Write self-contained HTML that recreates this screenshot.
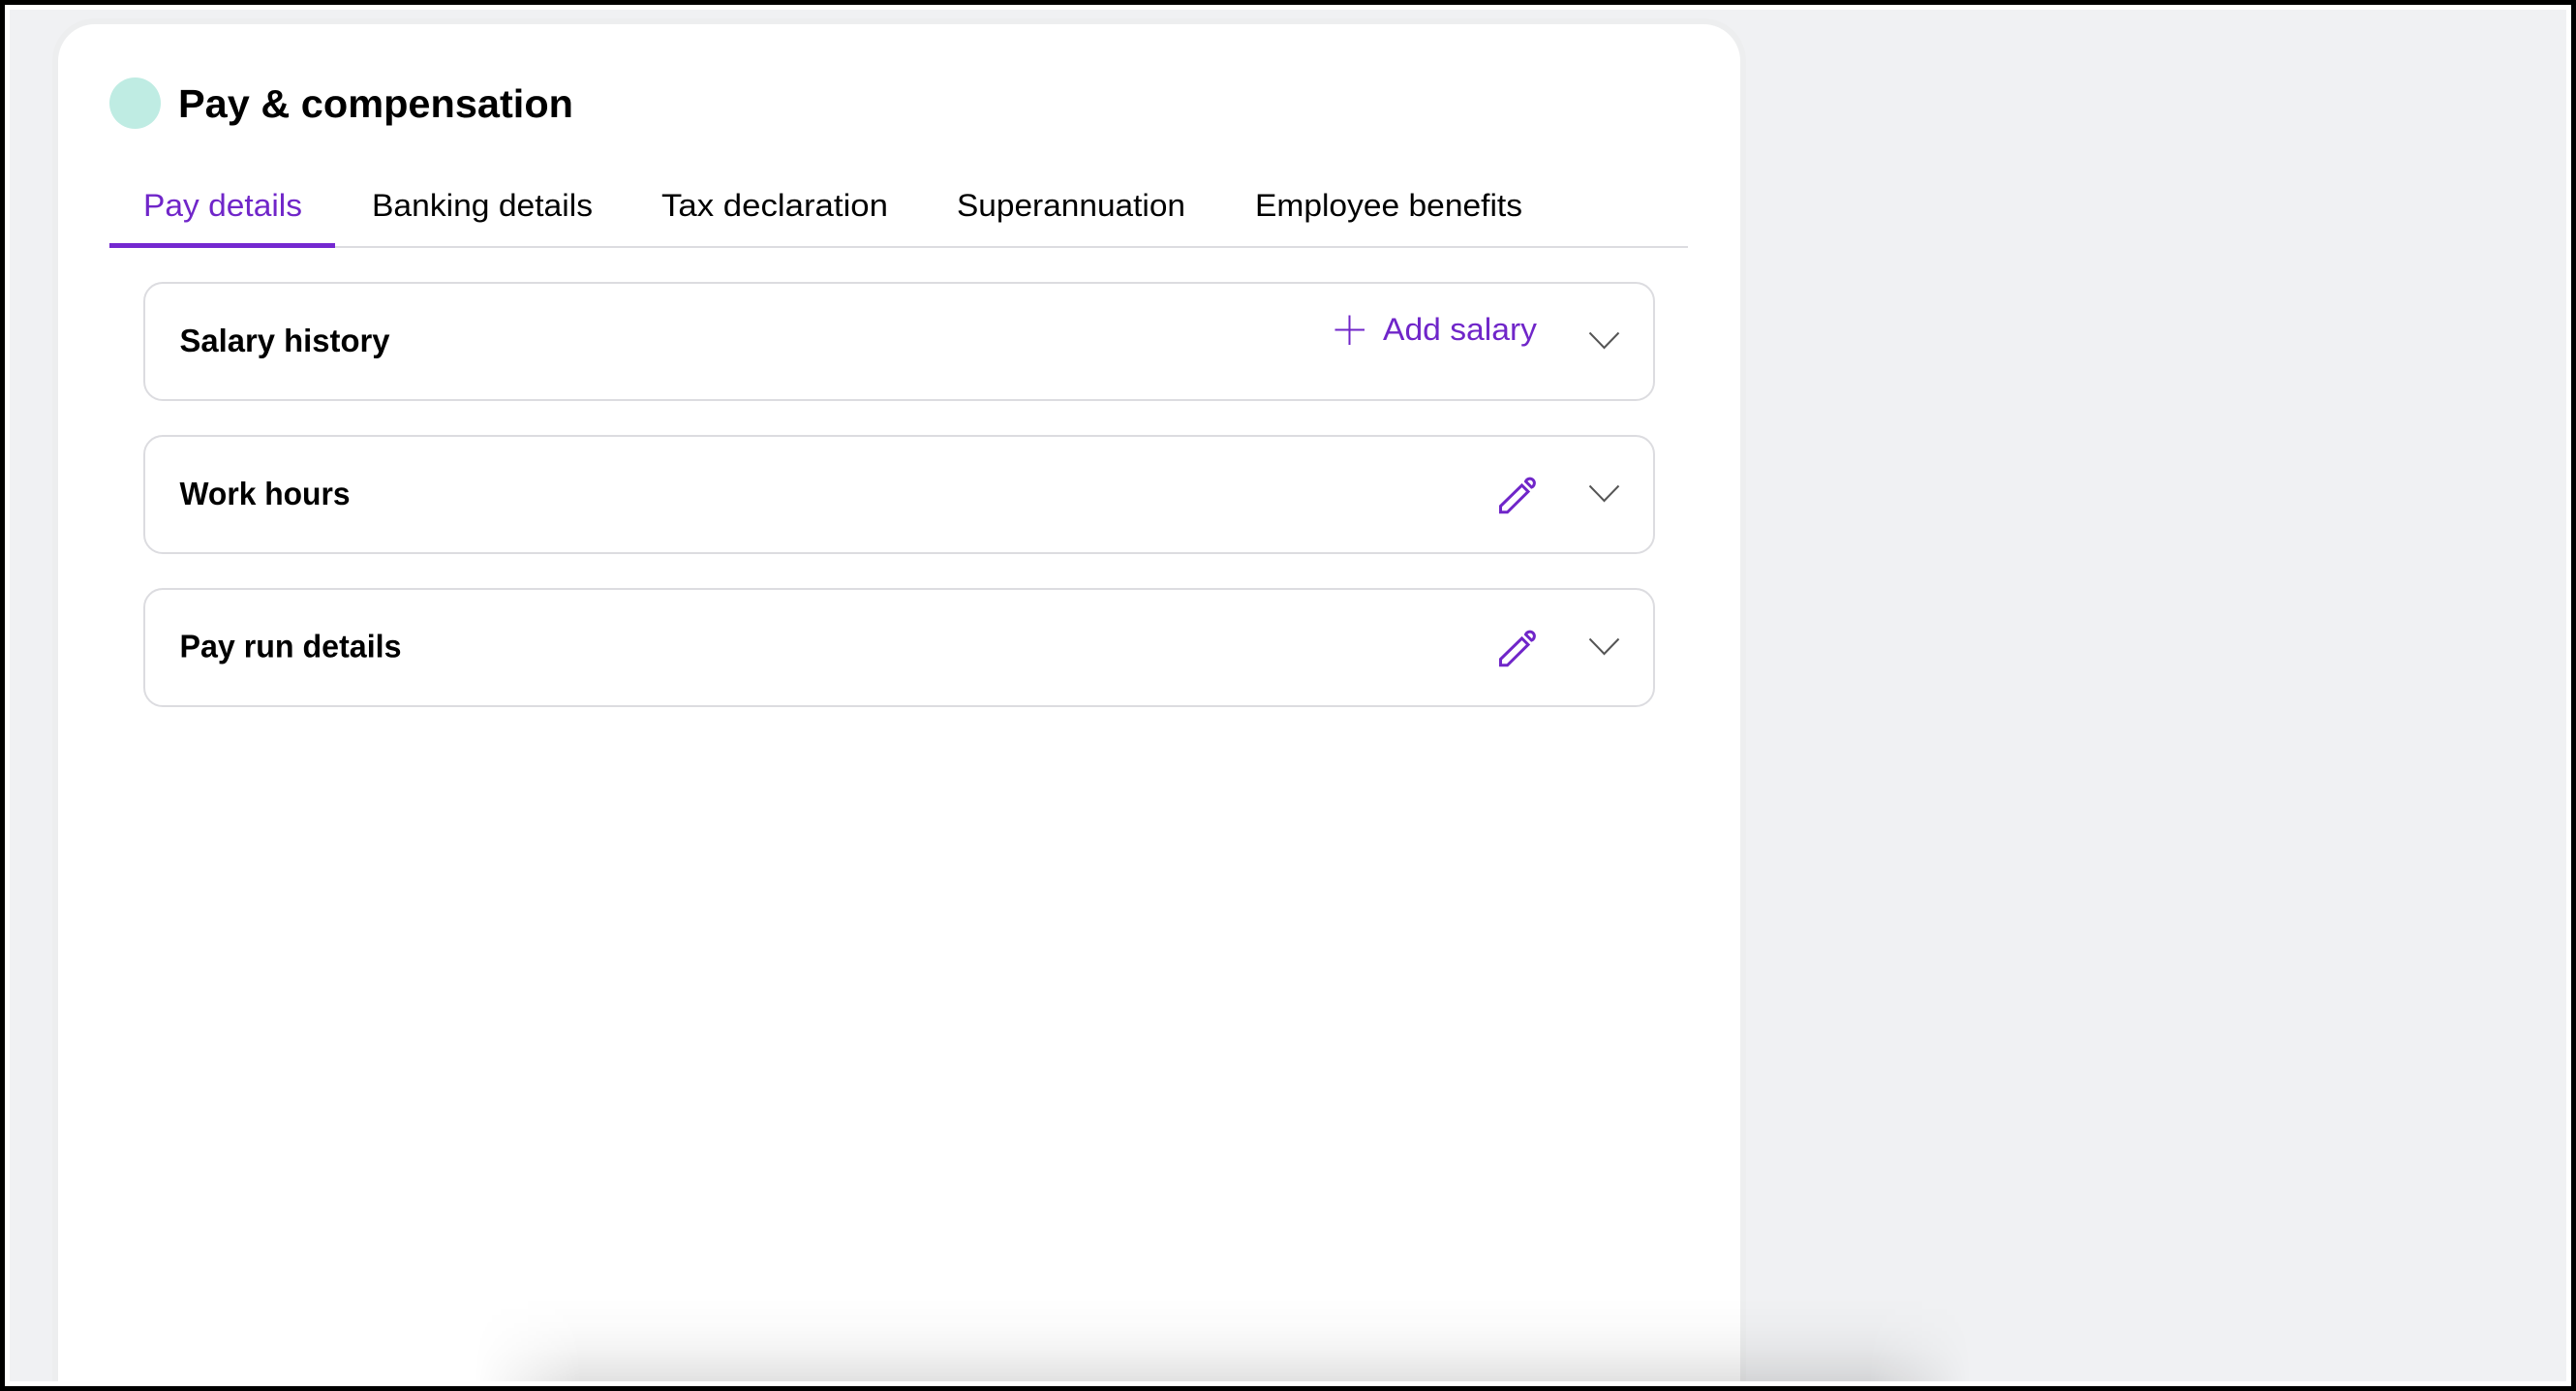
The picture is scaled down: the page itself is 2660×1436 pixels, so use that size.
<!DOCTYPE html>
<html>
<head>
<meta charset="utf-8">
<style>
html,body{margin:0;padding:0;width:2660px;height:1436px;overflow:hidden;background:#000}
#ring{position:absolute;left:5px;top:5px;width:2650px;height:1426px;background:#fff}
#stage{position:absolute;left:10px;top:10px;width:2640px;height:1416px;background:#f0f1f3;overflow:hidden}
#edge{position:absolute;left:44px;top:9px;width:1749px;height:1407px;background:#edeeef;border-radius:44px 44px 0 0}
#card{position:absolute;left:50px;top:15px;width:1737px;height:1401px;background:#fff;border-radius:38px 38px 0 0}
#shade{position:absolute;left:0;top:1330px;width:2640px;height:86px;
background:linear-gradient(to bottom,rgba(0,0,0,0) 0,rgba(0,0,0,.014) 29px,rgba(0,0,0,.042) 53px,rgba(0,0,0,.068) 63px,rgba(0,0,0,.115) 86px);
-webkit-mask-image:linear-gradient(to right,transparent 480px,rgba(0,0,0,.5) 535px,#000 590px,#000 1920px,rgba(0,0,0,.5) 1975px,transparent 2025px);
mask-image:linear-gradient(to right,transparent 480px,rgba(0,0,0,.5) 535px,#000 590px,#000 1920px,rgba(0,0,0,.5) 1975px,transparent 2025px)}
.row{position:absolute;left:148px;width:1557px;height:119px;border:2px solid #dcdce0;border-radius:20px;background:#fff}
#art{position:absolute;left:0;top:0;display:block}
text{font-family:"Liberation Sans",sans-serif}
.t{font-size:32px;fill:#000}
.b{font-size:33px;font-weight:700;fill:#000}
.p{fill:#7026c9}
</style>
</head>
<body>
<div id="ring"></div>
<div id="stage">
  <div id="edge"></div>
  <div id="card"></div>
  <div id="shade"></div>
</div>
<div class="row" style="top:291px"></div>
<div class="row" style="top:449px"></div>
<div class="row" style="top:607px"></div>
<svg id="art" width="2660" height="1436" viewBox="0 0 2660 1436" xmlns="http://www.w3.org/2000/svg">
  <ellipse cx="139.5" cy="106.5" rx="26.5" ry="26.5" fill="#bfece3"/>
  <text x="184" y="121" font-size="41" font-weight="700" fill="#000" textLength="408" lengthAdjust="spacingAndGlyphs">Pay &amp; compensation</text>

  <rect x="113" y="254" width="1630" height="2" fill="#dcdce0"/>
  <rect x="113" y="251" width="233" height="5" fill="#7428d0"/>
  <text class="t p" x="148" y="223" textLength="164" lengthAdjust="spacingAndGlyphs">Pay details</text>
  <text class="t" x="384" y="223" textLength="228" lengthAdjust="spacingAndGlyphs">Banking details</text>
  <text class="t" x="683" y="223" textLength="234" lengthAdjust="spacingAndGlyphs">Tax declaration</text>
  <text class="t" x="988" y="223" textLength="236" lengthAdjust="spacingAndGlyphs">Superannuation</text>
  <text class="t" x="1296" y="223" textLength="276" lengthAdjust="spacingAndGlyphs">Employee benefits</text>

  <text class="b" x="185.5" y="363" textLength="217" lengthAdjust="spacingAndGlyphs">Salary history</text>
  <text class="b" x="185.5" y="521" textLength="176" lengthAdjust="spacingAndGlyphs">Work hours</text>
  <text class="b" x="185.5" y="678.5" textLength="229" lengthAdjust="spacingAndGlyphs">Pay run details</text>

  <path d="M1393.5 325.5V356M1378.5 340.5H1409" stroke="#7026c9" stroke-width="2" fill="none"/>
  <text class="p" x="1428" y="351" font-size="32" textLength="159" lengthAdjust="spacingAndGlyphs">Add salary</text>

  <g fill="none" stroke="#555" stroke-width="2">
    <path d="M1641.5 343.5L1656.5 359L1671.5 343.5"/>
    <path d="M1641.5 501.5L1656.5 517L1671.5 501.5"/>
    <path d="M1641.5 659.5L1656.5 675L1671.5 659.5"/>
  </g>

  <g fill="none" stroke="#7026c9" stroke-width="3" stroke-linejoin="miter">
    <path d="M1549.5 522.5L1571.5 501L1578 507.5L1556.5 528.8H1549.5Z"/>
    <path d="M1575.5 497A4.6 4.6 0 1 1 1581.5 503Z"/>
  </g>
  <g fill="none" stroke="#7026c9" stroke-width="3" stroke-linejoin="miter" transform="translate(0 158)">
    <path d="M1549.5 522.5L1571.5 501L1578 507.5L1556.5 528.8H1549.5Z"/>
    <path d="M1575.5 497A4.6 4.6 0 1 1 1581.5 503Z"/>
  </g>
</svg>
</body>
</html>
